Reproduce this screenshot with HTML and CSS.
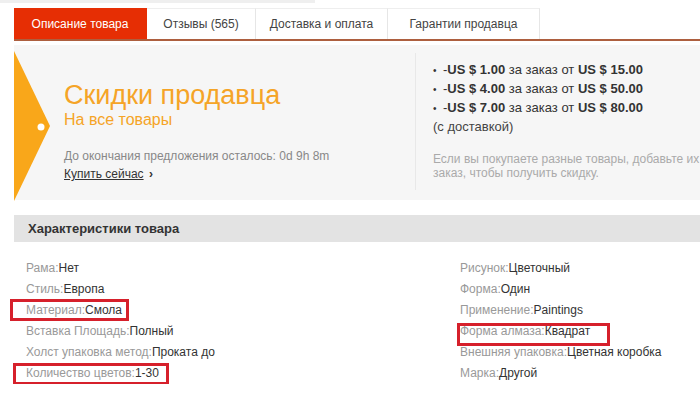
FILE: index.html
```html
<!DOCTYPE html>
<html lang="ru">
  <head>
    <meta charset="UTF-8" />
    <meta name="viewport" content="width=device-width, initial-scale=1.0" />
    <title>Описание товара</title>
    <link rel="stylesheet" href="styles.css">
  </head>
  <body>
    <div class="top-strip"></div>
    <div class="page">
      <ul class="tabs">
        <li class="active">Описание товара</li>
        <li>Отзывы (565)</li>
        <li>Доставка и оплата</li>
        <li>Гарантии продавца</li>
      </ul>

      <div class="promo">
        <svg class="flag" width="38" height="150" viewBox="0 0 38 150">
          <polygon points="0,0 36,75 0,150" fill="#f9a71a" />
          <circle cx="27" cy="76" r="3.5" fill="#fff" />
        </svg>
        <div class="promo-main">
          <h2>Скидки продавца</h2>
          <div class="promo-sub">На все товары</div>
          <div class="promo-timer">До окончания предложения осталось: 0d 9h 8m</div>
          <div class="promo-buy"><a href="#">Купить сейчас</a> <span class="arrow">›</span></div>
        </div>
        <div class="promo-side">
          <ul class="tiers">
            <li>-<b>US $ 1.00</b> за заказ от <b>US $ 15.00</b></li>
            <li>-<b>US $ 4.00</b> за заказ от <b>US $ 50.00</b></li>
            <li>-<b>US $ 7.00</b> за заказ от <b>US $ 80.00</b></li>
          </ul>
          <p class="shipping">(с доставкой)</p>
          <p class="note">Если вы покупаете разные товары, добавьте их в один заказ, чтобы получить скидку.</p>
        </div>
      </div>

      <h3 class="specs-title">Характеристики товара</h3>
      <ul class="specs">
        <li><span class="k">Рама:</span>Нет</li>
        <li><span class="k">Стиль:</span>Европа</li>
        <li class="mark mark-material"><span class="k">Материал:</span>Смола</li>
        <li><span class="k">Вставка Площадь:</span>Полный</li>
        <li><span class="k">Холст упаковка метод:</span>Проката до</li>
        <li class="mark mark-colors"><span class="k">Количество цветов:</span>1-30</li>
        <li><span class="k">Рисунок:</span>Цветочный</li>
        <li><span class="k">Форма:</span>Один</li>
        <li><span class="k">Применение:</span>Paintings</li>
        <li class="mark mark-shape"><span class="k">Форма алмаза:</span>Квадрат</li>
        <li><span class="k">Внешняя упаковка:</span>Цветная коробка</li>
        <li><span class="k">Марка:</span>Другой</li>
      </ul>
    </div>
  </body>
</html>
```

FILE: styles.css
```css
body {
  font-family: "Liberation Sans", Arial, sans-serif;
  background-color: #fff;
  color: #333;
  margin: 0;
  overflow: hidden;
}

.top-strip {
  width: 315px;
  height: 3px;
  background-color: #efefef;
}

.page {
  width: 800px;
  margin-left: 14px;
  padding-top: 5px;
}

/* tabs */

.tabs {
  display: flex;
  list-style: none;
  margin: 0;
  padding: 0;
  border-bottom: 2px solid #ad5f3f;
}

.tabs li {
  height: 31px;
  line-height: 31px;
  font-size: 12px;
  color: #444;
  text-align: center;
  border-right: 1px solid #e6e6e6;
  border-top: 1px solid #eee;
  box-sizing: border-box;
}

.tabs li:nth-child(1) { width: 133px; }
.tabs li:nth-child(2) { width: 109px; }
.tabs li:nth-child(3) { width: 132px; }
.tabs li:nth-child(4) { width: 152px; }

.tabs li.active {
  background-color: #e62e04;
  border-color: #e62e04;
  color: #fff;
}

/* seller discount */

.promo {
  display: flex;
  margin-top: 4px;
  height: 155px;
  padding-top: 6px;
  box-sizing: border-box;
  background-color: #f6f6f6;
}

.flag {
  flex: none;
  display: block;
}

.promo-main {
  width: 351px;
  padding: 30px 0 0 12px;
}

.promo-main h2 {
  margin: 0;
  font-size: 27px;
  font-weight: normal;
  line-height: 28px;
  color: #f5a427;
}

.promo-sub {
  font-size: 16px;
  line-height: 20px;
  margin-top: 1px;
  color: #f5a427;
}

.promo-timer {
  margin-top: 18px;
  font-size: 12px;
  line-height: 16px;
  color: #888;
}

.promo-buy {
  margin-top: 2px;
  font-size: 12px;
  line-height: 16px;
}

.promo-buy a {
  color: #333;
  text-decoration: underline;
}

.promo-buy .arrow {
  margin-left: 2px;
  font-weight: bold;
}

.promo-side {
  width: 320px;
  margin: 2px 0 10px;
  padding: 8px 0 0 17px;
  border-left: 1px solid #e8e8e8;
  font-size: 13px;
}

.tiers {
  list-style: none;
  margin: 0;
  padding: 0;
}

.tiers li {
  line-height: 18px;
  color: #333;
}

.tiers li::before {
  content: "•";
  display: inline-block;
  width: 10px;
  font-size: 10px;
}

.tiers b {
  color: #333;
}

.shipping {
  margin: 0;
  line-height: 18px;
  color: #444;
}

.note {
  margin: 16px 0 0;
  font-size: 12px;
  line-height: 14px;
  color: #aaa;
}

/* specifications */

.specs-title {
  margin: 15px 0 0;
  height: 27px;
  line-height: 27px;
  padding-left: 14px;
  background-color: #e3e3e3;
  font-size: 13px;
  color: #333;
}

.specs {
  list-style: none;
  margin: 0;
  padding: 16px 0 0 12px;
  display: grid;
  grid-template-columns: 434px 1fr;
  grid-template-rows: repeat(6, 21px);
  grid-auto-flow: column;
  font-size: 12px;
}

.specs li {
  line-height: 21px;
  justify-self: start;
  position: relative;
  color: #333;
}

.specs .k {
  color: #999;
}

.mark::after {
  content: "";
  position: absolute;
  border: 3px solid #d6202b;
}

.mark-material::after { left: -16px; right: -7px; top: -1px; bottom: 0; }
.mark-colors::after { left: -13px; right: -10px; top: 0; bottom: -1px; }
.mark-shape::after { left: -3px; right: -20px; top: 2px; bottom: -4px; }
```
